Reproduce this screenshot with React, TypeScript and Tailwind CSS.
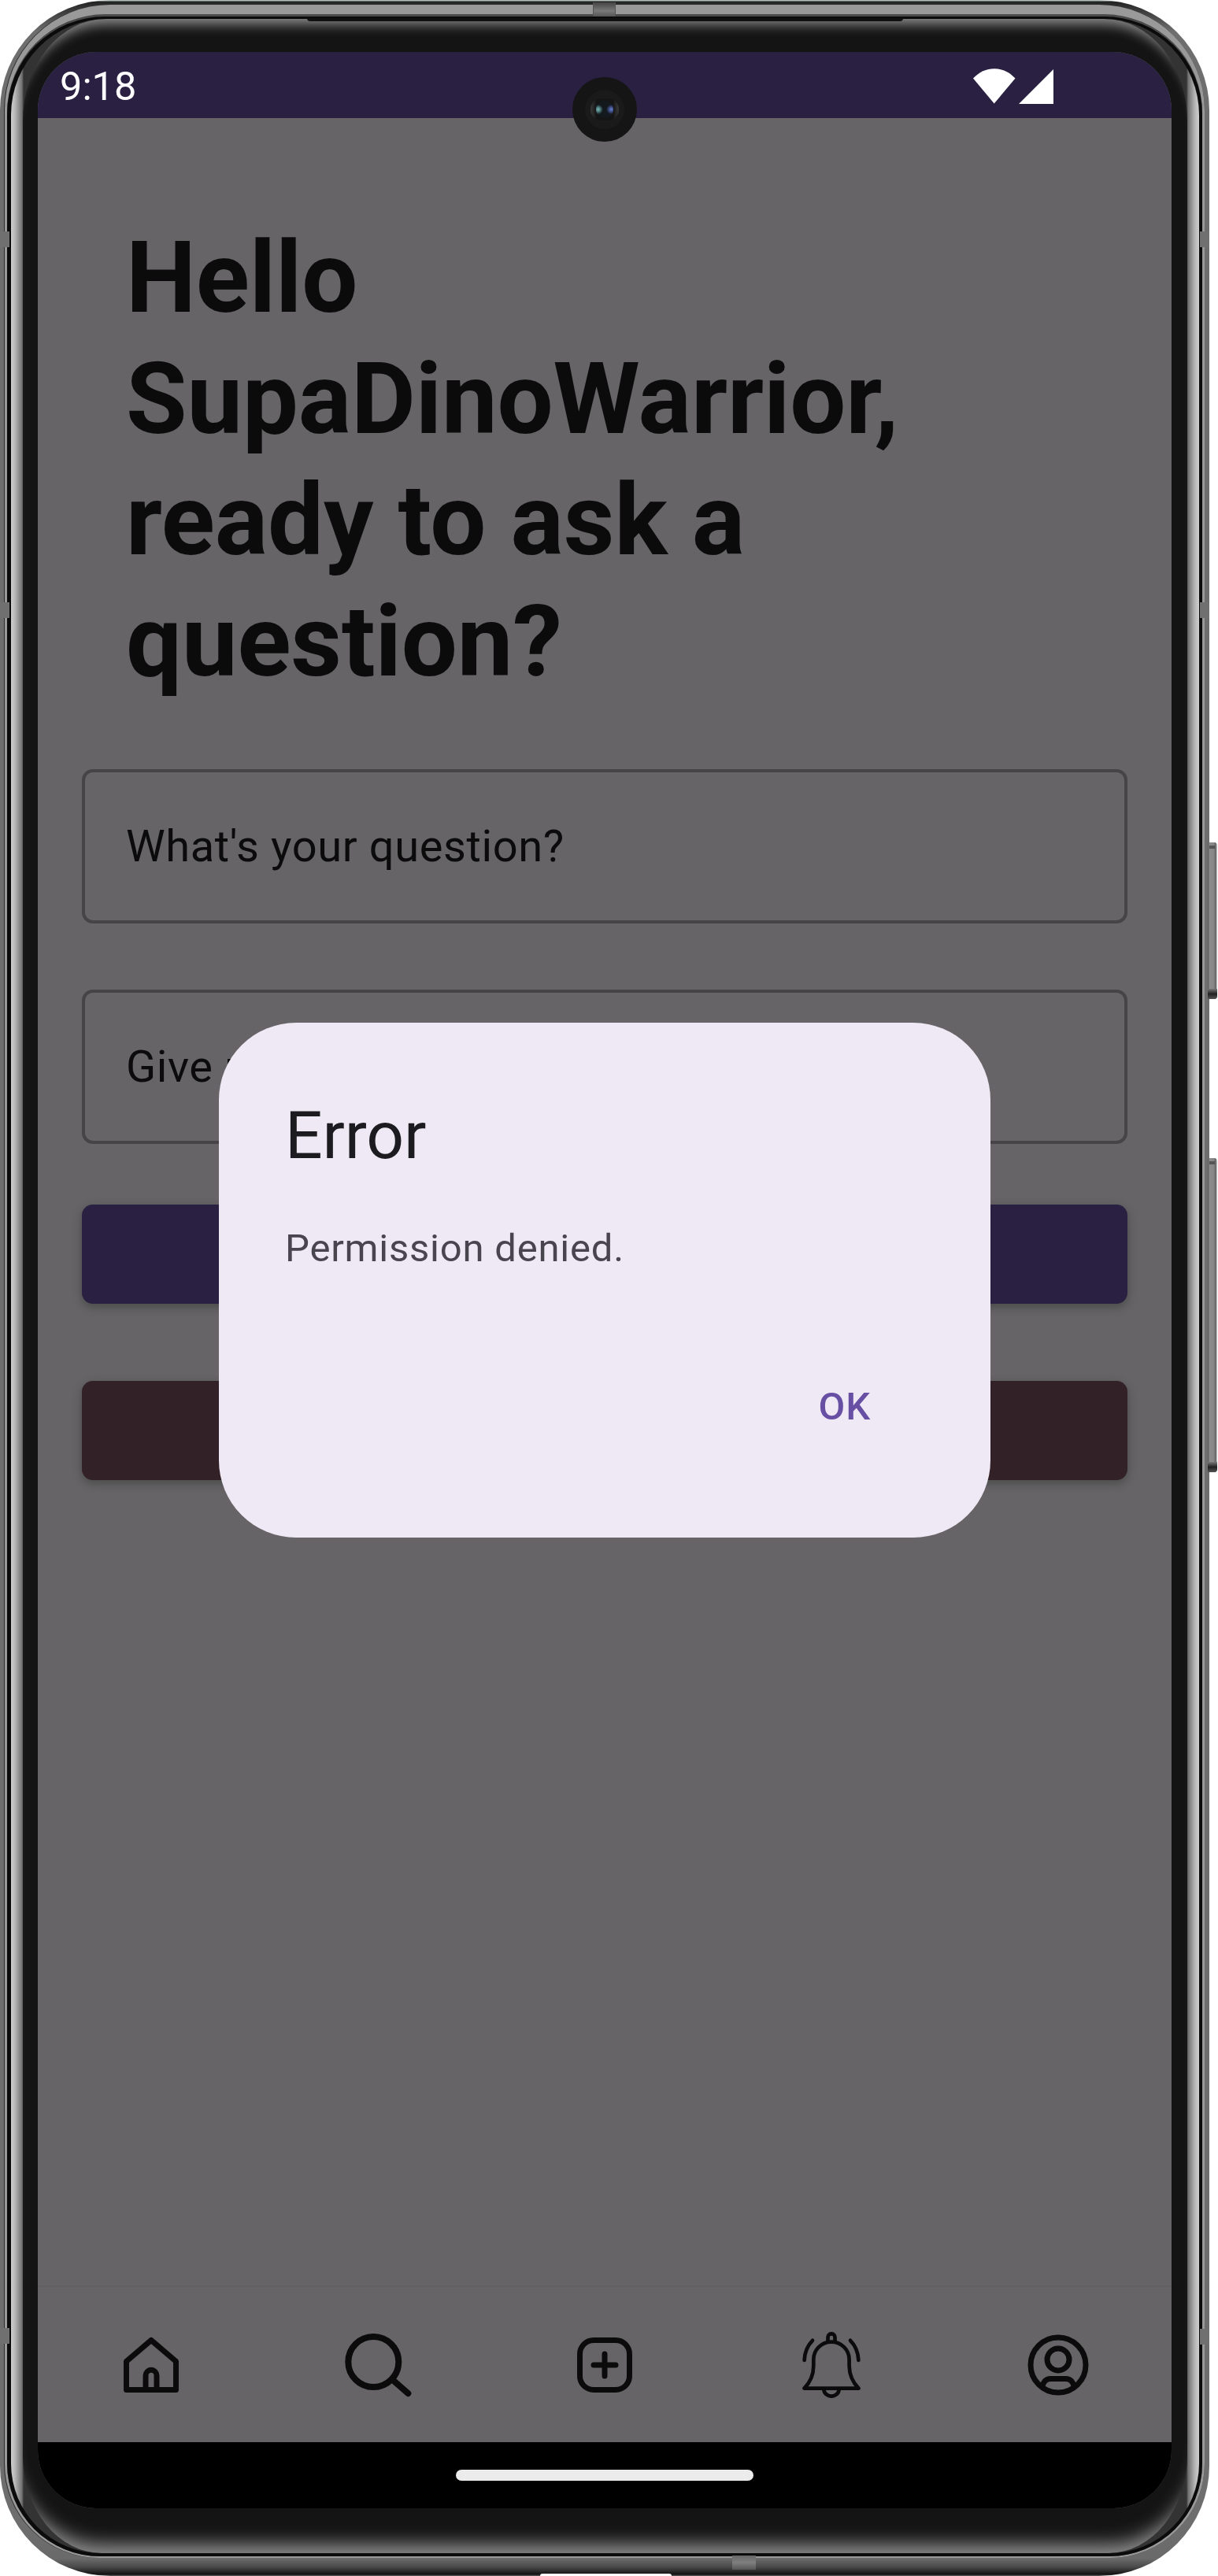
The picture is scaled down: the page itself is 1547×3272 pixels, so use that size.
import React from "react";

function HomeIcon() {
  return (
    <svg viewBox="0 0 24 24" className="size-[84px]" fill="none" stroke="currentColor" strokeWidth="2" strokeLinecap="round" strokeLinejoin="round">
      <path d="M12 3 3 10.7V21h18V10.7L12 3Z" />
      <path d="M10 21v-5.2a2 2 0 0 1 4 0V21" />
    </svg>
  );
}

function SearchIcon() {
  return (
    <svg viewBox="0 0 84 84" className="size-[84px] overflow-visible" fill="none" stroke="currentColor" strokeWidth="8" strokeLinecap="round">
      <circle cx="36.3" cy="38" r="32" />
      <path d="m62 62 18.3 16" />
    </svg>
  );
}

function AddIcon() {
  return (
    <svg viewBox="0 0 24 24" className="size-[84px]" fill="none" stroke="currentColor" strokeWidth="2" strokeLinecap="round">
      <rect x="3" y="3" width="18" height="18" rx="5" />
      <path d="M12 8v8M8 12h8" />
    </svg>
  );
}

function BellIcon() {
  return (
    <svg viewBox="0 0 84 84" className="size-[84px]" fill="none" stroke="currentColor" strokeWidth="4.7" strokeLinecap="round" strokeLinejoin="round">
      <path d="M37.5 11.5V6.8a4.5 4.5 0 0 1 9 0v4.7" />
      <path d="M19.3 35a22.6 22.3 0 0 1 45.3 0v8C64.8 55 69.5 64.5 76.6 71.6H7.4C14.5 64.5 19.3 55 19.3 43Z" />
      <path d="M32.4 73a9.6 8.6 0 0 0 19.2 0" />
      <path d="M18 10.8C11.5 17.5 8 26 7.6 35.8M66 10.8c6.5 6.7 10 15.2 10.4 25" />
    </svg>
  );
}

function ProfileIcon() {
  return (
    <svg viewBox="0 0 24 24" className="size-[84px]" fill="none" stroke="currentColor" strokeWidth="2">
      <circle cx="12" cy="12" r="10" />
      <circle cx="12" cy="10" r="4" />
      <path d="M6.2 20c.3-1.8 1.3-3 3-3h5.6c1.7 0 2.7 1.2 3 3" />
    </svg>
  );
}

function StatusBar() {
  return (
    <div className="flex h-[84px] shrink-0 items-center justify-between bg-[#292042] pr-[150px] pl-[28px] pt-[4px]">
      <span className="text-[50.5px] leading-none text-white">9:18</span>
      <svg viewBox="0 0 102 46" className="h-[46px] w-[102px]" fill="#fff">
        <path d="M0 12.5C15-4 38.500-4 53.500 12.500L26.700 44.500Z" />
        <path d="M102 1v44H58Z" />
      </svg>
    </div>
  );
}

function Camera() {
  return (
    <div className="absolute top-[98px] left-[727px] flex size-[82px] items-center justify-center rounded-full bg-[#151515]">
      <div className="flex size-[50px] items-center justify-center rounded-full bg-[#1a1a1a]">
        <div className="flex h-[28px] w-[36px] items-center justify-center rounded-full bg-[linear-gradient(90deg,#3a3a3a,#151515_20%,#151515_80%,#3a3a3a)]">
          <div className="size-[22px] rounded-full bg-[radial-gradient(circle_at_12%_50%,#7fb5b5_0,#4f7f80_12%,transparent_28%),radial-gradient(circle_at_88%_50%,#6c80c8_0,#41518f_12%,transparent_28%)] bg-[#14191d]" />
        </div>
      </div>
    </div>
  );
}

function Field({ label }: { label: string }) {
  return (
    <div className="flex h-[196px] items-center rounded-[14px] border-4 border-[#464447] pl-[52px] text-[56px] leading-none tracking-[0.61px] whitespace-nowrap">
      {label}
    </div>
  );
}

function SideKey({ className }: { className: string }) {
  return (
    <div className={`absolute left-[1534px] w-[12px] rounded-r-[4px] bg-[linear-gradient(90deg,#555,#8c8c8c_20%,#858585_70%,#555_78%,#c8c8c8)] ${className}`}>
      <div className="mt-[4px] ml-[2px] h-[4px] w-[7px] bg-[#555]" />
      <div className="absolute inset-x-0 bottom-0 h-[13px] rounded-br-[4px] bg-[linear-gradient(#777,#222_50%,#555)]" />
    </div>
  );
}

function AntennaBand({ className }: { className: string }) {
  return <div className={`absolute h-[20px] w-[12px] bg-[#707070] ${className}`} />;
}

function Dialog() {
  return (
    <div role="dialog" className="absolute top-[1233px] left-[230px] flex h-[654px] w-[980px] flex-col rounded-[98px] bg-[#eee9f4] px-[84px] pt-[88px] pb-[96px]">
      <h2 className="text-[84px] leading-[112px] tracking-[-0.2px] text-[#1c1b1f]">Error</h2>
      <p className="mt-[52px] text-[49px] leading-[70px] tracking-[0.78px] text-[#49454f]">Permission denied.</p>
      <button className="mt-auto mr-[68px] flex h-[140px] items-center self-end text-[49px] font-medium tracking-[0.9px] text-[#6750a4]">OK</button>
    </div>
  );
}

export default function App() {
  return (
    <div className="relative h-[3272px] w-[1547px] overflow-hidden bg-white font-[Roboto,sans-serif]">
      <SideKey className="top-[1070px] h-[199px]" />
      <SideKey className="top-[1471px] h-[399px]" />
      <div className="h-[3272px] w-[1536px] rounded-[140px] bg-[linear-gradient(180deg,#b5beb8_0,#b5beb8_1px,#1f2321_2px,#2a2a2a_5px,#6e6e6e_40px,#6e6e6e_3200px,#6a6a6a_3250px,#484848_3261px,#111_3270px,#666_3272px)] pt-[6px] pr-[6px] pb-[23px] pl-[5px]">
        <div className="h-full rounded-[134px_134px_120px_120px] bg-[#2d2d2d] pl-px">
          <div className="h-full rounded-[134px_134px_120px_120px] bg-[#999] pt-[12px] pr-[3px] pb-[2px] pl-[3px]">
            <div className="h-full rounded-[125px_125px_118px_118px] bg-[#4a4a4a] pt-[3px]">
              <div className="h-full rounded-[124px_124px_118px_118px] bg-[#0b0b0b] pt-[3px] pr-[4px] pb-[4px] pl-[5px]">
                <div className="h-full overflow-hidden rounded-[122px_122px_114px_114px] bg-[linear-gradient(90deg,#cfcfcf_0,#b8b8b8_5px,#707070_14px,#333_16px,#333_1493px,#707070_1495px,#b8b8b8_1504px,#cfcfcf_1509px)] px-[15px]">
                  <div className="h-full rounded-[105px_105px_100px_100px/130px_130px_124px_124px] bg-[#141414] px-[19px] pt-[42px] pb-[57px] shadow-[inset_0_22px_15px_-15px_#8a8a8a,inset_0_-32px_22px_-20px_#8a8a8a]">
                    <div className="relative flex h-[3120px] w-[1440px] flex-col overflow-hidden rounded-[74px] bg-[#666467] text-[#0b0b0c]">
                      <StatusBar />
                      <main className="flex grow flex-col px-[56px] pt-[126px]">
                        <h1 className="px-[56px] text-[126px] leading-[154px] font-bold tracking-[-0.12px] whitespace-nowrap">
                          Hello
                          <br />
                          SupaDinoWarrior,
                          <br />
                          ready to ask a
                          <br />
                          question?
                        </h1>
                        <div className="mt-[85px] flex flex-col gap-[84px]">
                          <Field label="What's your question?" />
                          <Field label="Give more details" />
                        </div>
                        <div className="mt-[77px] flex flex-col gap-[98px]">
                          <div className="h-[126px] rounded-[14px] bg-[#292042] shadow-[0_4px_12px_rgba(30,34,24,0.4)]" />
                          <div className="h-[126px] rounded-[14px] bg-[#322126] shadow-[0_4px_12px_rgba(30,34,24,0.4)]" />
                        </div>
                      </main>
                      <nav className="grid h-[199px] shrink-0 grid-cols-5 items-center justify-items-center border-t-2 border-[#626160]">
                        <HomeIcon />
                        <SearchIcon />
                        <AddIcon />
                        <BellIcon />
                        <ProfileIcon />
                      </nav>
                      <div className="flex h-[84px] shrink-0 items-center justify-center bg-black">
                        <div className="h-[14px] w-[378px] rounded-full bg-[#ebebeb]" />
                      </div>
                      <Dialog />
                    </div>
                  </div>
                </div>
              </div>
            </div>
          </div>
        </div>
      </div>
      <div className="absolute top-[3px] left-[753px] h-[18px] w-[29px] border-x border-[#555] bg-[linear-gradient(#444,#7a7a7a_60%,#555)]" />
      <div className="absolute top-[23px] left-[390px] h-[4px] w-[757px] rounded-b-full bg-[#111]" />
      <div className="absolute top-[3246px] left-[930px] h-[18px] w-[30px] bg-[linear-gradient(#666,#808080_50%,#555)]" />
      <div className="absolute top-[3269px] left-[686px] h-[3px] w-[167px] rounded-t-full bg-white" />
      <AntennaBand className="top-[294px] left-0" />
      <AntennaBand className="top-[765px] left-0" />
      <AntennaBand className="top-[2957px] left-0" />
      <AntennaBand className="top-[294px] left-[1524px]" />
      <AntennaBand className="top-[765px] left-[1524px]" />
      <AntennaBand className="top-[2958px] left-[1524px]" />
      <Camera />
    </div>
  );
}
